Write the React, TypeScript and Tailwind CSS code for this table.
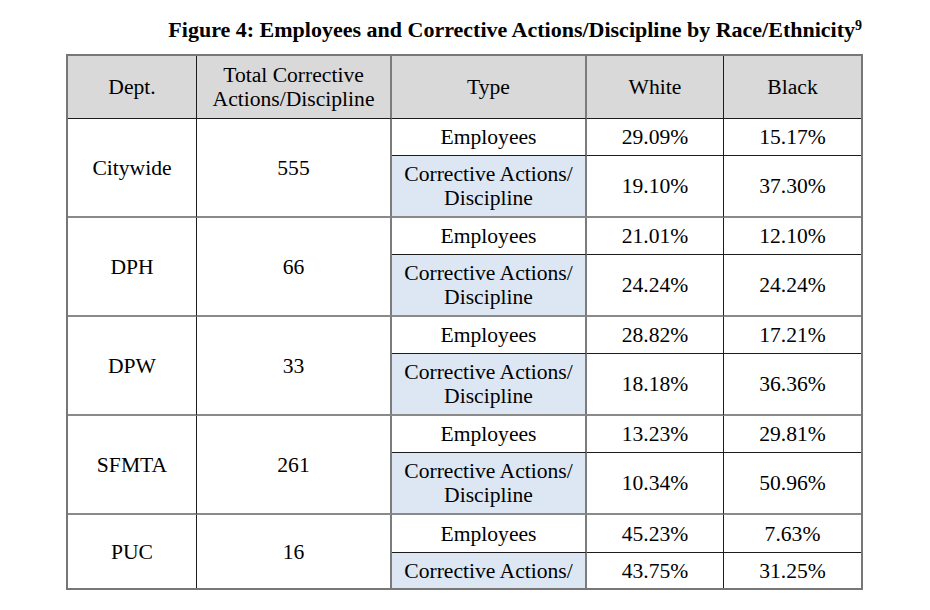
const rows = [
  { dept: "Citywide", total: "555", emp: ["29.09%", "15.17%"], ca: ["19.10%", "37.30%"] },
  { dept: "DPH", total: "66", emp: ["21.01%", "12.10%"], ca: ["24.24%", "24.24%"] },
  { dept: "DPW", total: "33", emp: ["28.82%", "17.21%"], ca: ["18.18%", "36.36%"] },
  { dept: "SFMTA", total: "261", emp: ["13.23%", "29.81%"], ca: ["10.34%", "50.96%"] },
  { dept: "PUC", total: "16", emp: ["45.23%", "7.63%"], ca: ["43.75%", "31.25%"] },
];

// line styles picked from the scan: some rules print thin/dark, others wide/grey
const vDark = "border-r border-r-[#1c1c1c]";
const vGrey = "border-r-2 border-r-[#7c7c7c]";
const hDark = "border-b border-b-[#1c1c1c]";
const hGrey = "border-b-2 border-b-[#8a8a8a]";

const cell = "flex items-center justify-center text-center";

const App = () => {
  return (
    <div className="min-h-[610px] w-[930px] bg-white text-black font-['Liberation_Serif','Times_New_Roman','DejaVu_Serif',serif]">
      <div className="ml-[66px] w-[797px]">
        <h1 className="pt-[18px] pr-[1px] text-right text-[22px] font-bold leading-[24px] mb-[12px]">
          Figure 4: Employees and Corrective Actions/Discipline by Race/Ethnicity
          <sup className="text-[14px] leading-none">9</sup>
        </h1>

        <div className="grid grid-cols-[129px_195px_195px_137px_137px] grid-rows-[63px_37px_62px_37px_62px_37px_62px_37px_62px_38px_35px] border-2 border-[#777] text-[21.6px] leading-[24px] overflow-hidden">
          {/* header */}
          <div className={`${cell} bg-[#d9d9d9] ${vDark} ${hDark}`}>Dept.</div>
          <div className={`${cell} bg-[#d9d9d9] ${vGrey} ${hDark}`}>
            Total Corrective
            <br />
            Actions/Discipline
          </div>
          <div className={`${cell} bg-[#d9d9d9] ${vGrey} ${hDark}`}>Type</div>
          <div className={`${cell} bg-[#d9d9d9] ${vDark} ${hDark}`}>White</div>
          <div className={`${cell} bg-[#d9d9d9] ${hDark}`}>Black</div>

          {rows.map((r, i) => {
            const last = i === rows.length - 1;
            const groupBottom = last ? "" : hGrey;
            return [
              <div key={`${r.dept}-d`} className={`${cell} row-span-2 ${vDark} ${groupBottom}`}>
                {r.dept}
              </div>,
              <div key={`${r.dept}-t`} className={`${cell} row-span-2 ${vGrey} ${groupBottom}`}>
                {r.total}
              </div>,
              <div key={`${r.dept}-e`} className={`${cell} ${vGrey} ${hDark}`}>
                Employees
              </div>,
              <div key={`${r.dept}-ew`} className={`${cell} ${vDark} ${hDark}`}>
                {r.emp[0]}
              </div>,
              <div key={`${r.dept}-eb`} className={`${cell} ${hDark}`}>
                {r.emp[1]}
              </div>,
              <div key={`${r.dept}-c`} className={`${cell} bg-[#dde7f3] ${vGrey} ${groupBottom}`}>
                {last ? (
                  "Corrective Actions/"
                ) : (
                  <span>
                    Corrective Actions/
                    <br />
                    Discipline
                  </span>
                )}
              </div>,
              <div key={`${r.dept}-cw`} className={`${cell} ${vDark} ${groupBottom}`}>
                {r.ca[0]}
              </div>,
              <div key={`${r.dept}-cb`} className={`${cell} ${groupBottom}`}>
                {r.ca[1]}
              </div>,
            ];
          })}
        </div>
      </div>
    </div>
  );
};

export default App;
